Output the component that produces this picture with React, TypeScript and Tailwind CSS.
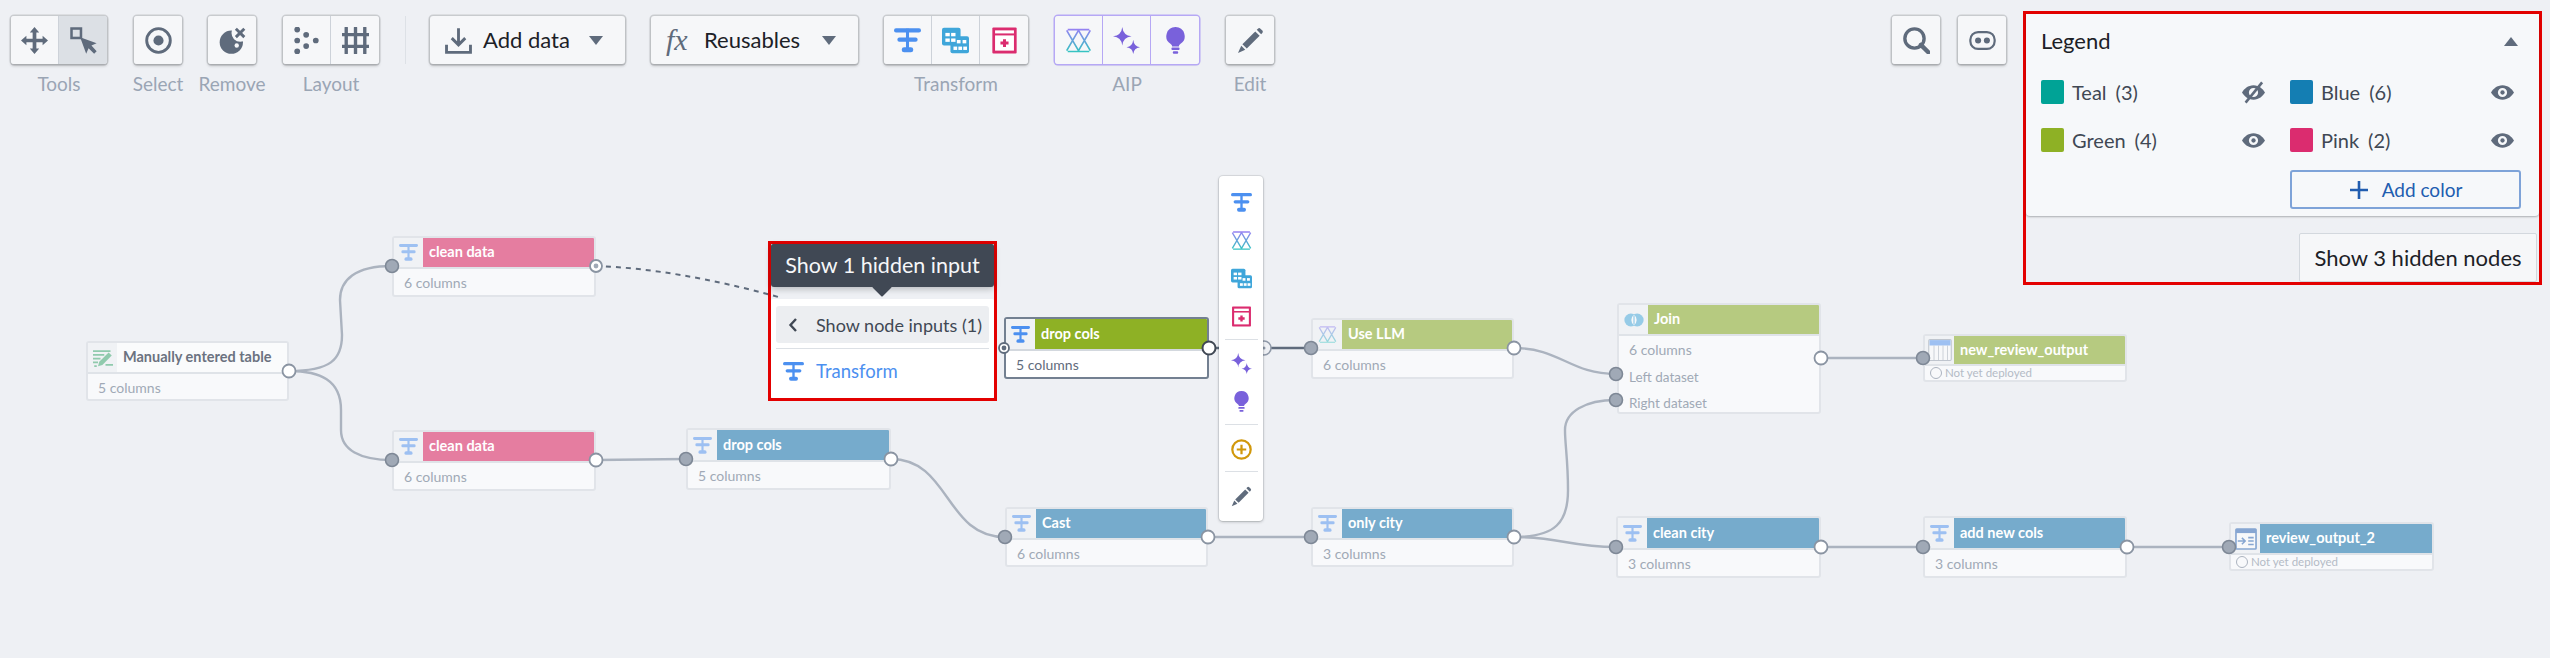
import React from "react";

const G = "#5F6B7C";

function Ic({ s = 27, children, className }: { s?: number; children: React.ReactNode; className?: string }) {
  return (
    <svg width={s} height={s} viewBox="0 0 16 16" className={className} aria-hidden="true">
      {children}
    </svg>
  );
}

const MoveI = () => (
  <Ic><path fill={G} d="M8 0 L5.2 3.2 H6.9 V6.9 H3.2 V5.2 L0 8 L3.2 10.8 V9.1 H6.9 V12.8 H5.2 L8 16 L10.8 12.8 H9.1 V9.1 H12.8 V10.8 L16 8 L12.8 5.2 V6.9 H9.1 V3.2 H10.8 Z" /></Ic>
);
const SelectI = () => (
  <Ic>
    <rect x="0.9" y="0.9" width="5.6" height="5.6" fill="none" stroke={G} strokeWidth="1.5" />
    <path fill={G} d="M6 6 L15.8 9.6 L12.7 11 L15.8 14.3 L14.3 15.8 L11 12.6 L9.6 15.8 Z" />
  </Ic>
);
const RingI = () => (
  <Ic>
    <circle cx="8" cy="8" r="7" fill="none" stroke={G} strokeWidth="1.7" />
    <circle cx="8" cy="8" r="3" fill={G} />
  </Ic>
);
const RemoveI = () => (
  <Ic>
    <circle cx="7.3" cy="9" r="6.9" fill={G} />
    <circle cx="12.6" cy="3.6" r="5.2" fill="#F6F7F9" />
    <circle cx="10.5" cy="11" r="1.3" fill="#F6F7F9" />
    <path d="M10 1 L15 6 M15 1 L10 6" stroke={G} strokeWidth="1.7" fill="none" />
  </Ic>
);
const LayoutI = () => (
  <Ic>
    {[[2.5, 1.5, 1.7], [2.5, 8, 1.7], [2.5, 14.5, 1.7], [7.8, 4.6, 1.7], [7.8, 11.3, 1.7], [13.5, 8, 1.7]].map(([x, y, r], i) => (
      <circle key={i} cx={x} cy={y} r={r} fill={G} />
    ))}
  </Ic>
);
const GridI = () => (
  <Ic><path d="M2.5 0.5V15.5 M8 0.5V15.5 M13.5 0.5V15.5 M0.5 4.5H15.5 M0.5 11.5H15.5" stroke={G} strokeWidth="2" fill="none" strokeLinecap="round" /></Ic>
);
const ImportI = () => (
  <Ic>
    <path d="M8 0.8V10 M4 6.6 L8 10.6 L12 6.6" stroke={G} strokeWidth="1.7" fill="none" />
    <path d="M0.9 10.5V15H15.1V10.5" stroke={G} strokeWidth="1.7" fill="none" />
  </Ic>
);
const TransformI = ({ s = 27 }: { s?: number }) => (
  <Ic s={s}>
    <rect x="0" y="0.8" width="16" height="2.5" rx="1.2" fill="#4C90F0" />
    <rect x="2" y="6.2" width="12" height="2.5" rx="1.2" fill="#4C90F0" />
    <rect x="4.6" y="12" width="6.8" height="3" rx="1.4" fill="#4C90F0" />
    <rect x="7.1" y="1" width="1.8" height="12" fill="#4C90F0" />
  </Ic>
);
const ContourI = ({ s = 27 }: { s?: number }) => (
  <Ic s={s}>
    <defs>
      <linearGradient id={`cg${s}`} x1="0" y1="1" x2="0" y2="15" gradientUnits="userSpaceOnUse">
        <stop offset="0" stopColor="#9881F3" />
        <stop offset="1" stopColor="#32C5C0" />
      </linearGradient>
    </defs>
    <path
      d="M1.6 1.5 H14.4 M1.6 14.5 H14.4 M1 2 L8 14 M8 2 L1 14 M8 2 L15 14 M15 2 L8 14"
      fill="none"
      stroke={`url(#cg${s})`}
      strokeWidth="1"
    />
  </Ic>
);
const TablesI = ({ s = 27 }: { s?: number }) => (
  <Ic s={s}>
    <rect x="0" y="0.5" width="11" height="10.5" rx="1.2" fill="#3FA6DA" />
    <rect x="5" y="5.5" width="11" height="10" rx="1.2" fill="#3FA6DA" />
    {[[2, 3.5], [5.4, 3.5], [2, 6.8], [5.4, 6.8]].map(([x, y], i) => (
      <rect key={i} x={x} y={y} width="2.6" height="2" fill="#fff" />
    ))}
    {[[8.8, 7.7], [12.2, 7.7], [6.8, 11.6], [9.7, 11.6], [12.6, 11.6]].map(([x, y], i) => (
      <rect key={i} x={x} y={y} width="2.2" height="2" fill="#fff" />
    ))}
  </Ic>
);
const CardI = ({ s = 27 }: { s?: number }) => (
  <Ic s={s}>
    <rect x="0.8" y="0.3" width="14.4" height="15.4" rx="0.6" fill="#DB2C6F" />
    <rect x="2.4" y="2" width="11.2" height="1.8" fill="#fff" />
    <rect x="2.4" y="5" width="11.2" height="9" fill="#fff" />
    <path d="M8 7.2V11.8 M5.6 9.5H10.4" stroke="#DB2C6F" strokeWidth="1.8" />
  </Ic>
);
const SparkI = ({ s = 27 }: { s?: number }) => (
  <Ic s={s}>
    <path fill="#7961DB" d="M5.5 0 Q6 5 11 5.5 Q6 6 5.5 11 Q5 6 0 5.5 Q5 5 5.5 0Z" />
    <path fill="#7961DB" d="M12 7.6 Q12.4 11.6 16 12 Q12.4 12.4 12 16 Q11.6 12.4 8 12 Q11.6 11.6 12 7.6Z" />
  </Ic>
);
const BulbI = ({ s = 27 }: { s?: number }) => (
  <Ic s={s}>
    <path fill="#7961DB" d="M8 0a5.4 5.4 0 0 0-3 9.9c.7.5 1 1 1 1.6h4c0-.6.3-1.1 1-1.6A5.4 5.4 0 0 0 8 0z" />
    <rect x="5.6" y="12.2" width="4.8" height="1.4" rx=".5" fill="#7961DB" />
    <rect x="6.4" y="14.4" width="3.2" height="1.4" rx=".6" fill="#7961DB" />
  </Ic>
);
const PencilI = ({ s = 27, c = G }: { s?: number; c?: string }) => (
  <Ic s={s}>
    <path fill={c} d="M3.2 10.2 L10.8 2.6 L13.4 5.2 L5.8 12.8 Z" />
    <path fill={c} d="M11.7 1.7 l.7-.7 a1.1 1.1 0 0 1 1.5 0 l1.1 1.1 a1.1 1.1 0 0 1 0 1.5 l-.7.7 Z" />
    <path fill={c} d="M2.5 11.1 L4.9 13.5 L0.6 15.4 Z" />
  </Ic>
);
const SearchI = () => (
  <Ic>
    <circle cx="6.8" cy="6.8" r="5.7" fill="none" stroke={G} strokeWidth="2" />
    <path d="M10.6 10.6 L15 15" stroke={G} strokeWidth="2.6" strokeLinecap="round" />
  </Ic>
);
const RobotI = () => (
  <Ic>
    <rect x="0.8" y="3" width="14.4" height="10" rx="4.6" fill="none" stroke={G} strokeWidth="1.3" />
    <circle cx="5.4" cy="8" r="1.8" fill={G} />
    <circle cx="10.6" cy="8" r="1.8" fill={G} />
  </Ic>
);
const EyeI = ({ off }: { off?: boolean }) => (
  <Ic s={23}>
    <path
      fill={G}
      fillRule="evenodd"
      d="M8 3C4.2 3 1.4 5.6 0 8c1.4 2.4 4.2 5 8 5s6.6-2.6 8-5c-1.4-2.4-4.2-5-8-5zM8 4.8a3.2 3.2 0 1 1 0 6.4 3.2 3.2 0 0 1 0-6.4z"
    />
    {off ? (
      <path d="M2.5 15 L14 1" stroke={G} strokeWidth="1.8" />
    ) : (
      <circle cx="8" cy="8" r="1.5" fill={G} />
    )}
  </Ic>
);
const Caret = ({ up }: { up?: boolean }) => (
  <svg width="14" height="11" viewBox="0 0 14 11" aria-hidden="true">
    <path d={up ? "M7 1 L14 10 H0 Z" : "M0 1 H14 L7 10 Z"} fill={G} />
  </svg>
);
const ManualI = () => (
  <Ic s={20}>
    <path d="M0 2.5H14 M0 5.5H9 M0 8.5H6 M0 11.5H4 M10 13.5H16 M1 14.5H3" stroke="#32A467" strokeWidth="1.3" />
    <path d="M5 11 L12.5 3.5 L15 6 L7.5 13.5 L4 14.5 Z" fill="#32A467" />
  </Ic>
);
const JoinI = () => (
  <Ic s={20}>
    <circle cx="5.5" cy="8" r="5.2" fill="#3FA6DA" />
    <circle cx="10.5" cy="8" r="5.2" fill="#3FA6DA" />
    <path d="M8 3.8a5.2 5.2 0 0 1 0 8.4a5.2 5.2 0 0 1 0-8.4Z" fill="#fff" />
    <path d="M8 4.4v7.2" stroke="#3FA6DA" strokeWidth="1" />
  </Ic>
);
const TableI = () => (
  <svg width="24" height="24" viewBox="0 0 16 16" aria-hidden="true">
    <rect x="0.5" y="1" width="15" height="14" rx="0.8" fill="#fff" stroke="#8F99A8" strokeWidth="0.7" />
    <rect x="1" y="1.4" width="14" height="3.6" fill="#4C90F0" />
    <path d="M4 5V15 M7 5V15 M10 5V15 M13 5V15" stroke="#8F99A8" strokeWidth="0.5" />
  </svg>
);
const OutputI = () => (
  <svg width="22" height="22" viewBox="0 0 16 16" aria-hidden="true">
    <rect x="0.7" y="0.7" width="14.6" height="14.6" rx="0.6" fill="#fff" stroke="#215DB0" strokeWidth="1.2" />
    <rect x="0.7" y="0.7" width="14.6" height="3" fill="#215DB0" />
    <path d="M2 9.5H7 M5 7.2 L7.4 9.5 L5 11.8 M9.6 7H13.6 M9.6 9.5H13.6 M9.6 12H13.6" stroke="#215DB0" strokeWidth="1.1" fill="none" />
  </svg>
);

function Btn({ children, active, purple, wide }: { children: React.ReactNode; active?: boolean; purple?: boolean; wide?: boolean }) {
  return (
    <button
      className={`flex h-[48px] items-center justify-center ${wide ? "" : "w-[48px]"} ${active ? "bg-[#DCE0E5]" : "bg-[#F6F7F9]"} ${
        purple ? "border-r-[1.5px] border-[#B6A8F5] last:border-r-0" : "border-r border-[#CDD2D9] last:border-r-0"
      }`}
    >
      {children}
    </button>
  );
}

function Group({ label, purple, children }: { label?: string; purple?: boolean; children: React.ReactNode }) {
  return (
    <div className="flex flex-col items-center">
      <div
        className={`flex overflow-hidden rounded-[3px] ${
          purple
            ? "shadow-[0_0_0_1.5px_#B6A8F5,0_1px_2px_rgba(17,20,24,0.15)]"
            : "shadow-[0_0_0_1.5px_rgba(17,20,24,0.14),0_1.5px_3px_rgba(17,20,24,0.22)]"
        }`}
      >
        {children}
      </div>
      <div className="flex h-[33px] w-0 items-end justify-center overflow-visible">
        <span className="whitespace-nowrap text-[19px] leading-[26px] text-[#9AA5B4]">{label}</span>
      </div>
    </div>
  );
}

function DropBtn({ icon, label, w }: { icon: React.ReactNode; label: string; w: string }) {
  return (
    <div className={`flex h-[48px] ${w} items-center gap-[11px] rounded-[3px] bg-[#F6F7F9] pl-[15px] pr-[22px] shadow-[0_0_0_1.5px_rgba(17,20,24,0.14),0_1.5px_3px_rgba(17,20,24,0.22)]`}>
      {icon}
      <span className="flex-1 whitespace-nowrap text-[22px] leading-none text-[#1C2127]">{label}</span>
      <Caret />
    </div>
  );
}

type N = {
  x: number;
  y: number;
  w: number;
  h: number;
  hh: number;
  color: string;
  title: string;
  icon: React.ReactNode;
  dim?: boolean;
  selected?: boolean;
  children: React.ReactNode;
};

function Node({ x, y, w, h, hh, color, title, icon, dim = true, selected, children }: N) {
  return (
    <div
      className={`absolute flex flex-col overflow-hidden rounded-[3px] border-2 ${selected ? "border-[#738091] bg-white" : "border-[#E1E4E9] bg-[#F8F9FB]"}`}
      style={{ left: x, top: y, width: w, height: h }}
    >
      <div className={`flex shrink-0 border-b-2 ${selected ? "border-[#D3D8DE]" : "border-[#DFE3E8]"}`} style={{ height: hh }}>
        <div className="flex w-[29px] shrink-0 items-center justify-center bg-[#F0F2F5]">
          <span className={dim ? "flex opacity-50" : "flex"}>{icon}</span>
        </div>
        <div className={`flex flex-1 items-center truncate pl-[6px] text-[14.5px] font-bold leading-none ${color}`}>{title}</div>
      </div>
      {children}
    </div>
  );
}

const Cols = ({ t, dark }: { t: string; dark?: boolean }) => (
  <div className={`pl-[10px] text-[14px] leading-[28px] ${dark ? "text-[#5F6B7C]" : "text-[#A0A9B6]"}`}>{t}</div>
);
const Deploy = () => (
  <div className="flex h-[18px] items-center gap-[3px] pl-[5px] text-[11.5px] leading-none text-[#B4BBC6]">
    <span className="h-[12px] w-[12px] rounded-full border border-[#ABB3BF]" />
    Not yet deployed
  </div>
);

const PINK = "bg-[#E57DA0] text-white";
const BLUE = "bg-[#76ABCC] text-white";
const LIME = "bg-[#B6CA80] text-white";

const ports: [number, number, "in" | "out" | "dot" | "sel" | "dotin"][] = [
  [289, 371, "out"],
  [392, 266, "in"],
  [596, 266, "dot"],
  [392, 460, "in"],
  [596, 460, "out"],
  [686, 459, "in"],
  [891, 459, "out"],
  [1005, 537, "in"],
  [1208, 537, "out"],
  [1311, 537, "in"],
  [1514, 537, "out"],
  [1004, 348, "dotin"],
  [1209, 348, "sel"],
  [1311, 348, "in"],
  [1514, 348, "out"],
  [1616, 374, "in"],
  [1616, 400, "in"],
  [1821, 358, "out"],
  [1923, 358, "in"],
  [1616, 547, "in"],
  [1821, 547, "out"],
  [1923, 547, "in"],
  [2127, 547, "out"],
  [2229, 547, "in"],
];

const edges = [
  "M289 371 C330 371 342 360 342 335 L340 300 C340 280 355 266 392 266",
  "M289 371 C320 371 341 380 341 410 L341 430 C341 450 360 460 392 460",
  "M596 460 L686 459",
  "M891 459 C950 459 945 537 1005 537",
  "M1208 537 L1311 537",
  "M1514 348 C1560 348 1570 374 1616 374",
  "M1514 537 C1556 537 1568 522 1568 490 C1568 460 1565 445 1565 430 C1565 412 1585 400 1616 400",
  "M1514 537 C1560 537 1570 547 1616 547",
  "M1821 358 L1923 358",
  "M1821 547 L1923 547",
  "M2127 547 L2229 547",
];

function LegendRow({ c, name, n, off }: { c: string; name: string; n: number; off?: boolean }) {
  return (
    <div className="flex h-[24px] items-center">
      <span className={`h-[24px] w-[23px] rounded-[2px] ${c}`} />
      <span className="ml-[8px] text-[20px] leading-none text-[#404854]">{name}</span>
      <span className="ml-[9px] flex-1 text-[20px] leading-none text-[#404854]">({n})</span>
      <EyeI off={off} />
    </div>
  );
}

export default function App() {
  return (
    <div className="relative h-[658px] w-[2550px] overflow-hidden bg-[#EEF0F4] font-['Lato','Open_Sans',sans-serif]">
      {/* Toolbar */}
      <div className="flex items-start pl-[11px] pt-[16px]">
        <Group label="Tools">
          <Btn><MoveI /></Btn>
          <Btn active><SelectI /></Btn>
        </Group>
        <div className="ml-[27px]"><Group label="Select"><Btn><RingI /></Btn></Group></div>
        <div className="ml-[26px]"><Group label="Remove"><Btn><RemoveI /></Btn></Group></div>
        <div className="ml-[27px]">
          <Group label="Layout">
            <Btn><LayoutI /></Btn>
            <Btn><GridI /></Btn>
          </Group>
        </div>
        <div className="ml-[26px] h-[48px] w-px bg-[#DDE1E6]" />
        <div className="ml-[24px]"><DropBtn w="w-[195px]" icon={<ImportI />} label="Add data" /></div>
        <div className="ml-[26px]">
          <DropBtn
            w="w-[207px]"
            icon={<span className="w-[27px] font-['Liberation_Serif',serif] text-[30px] italic leading-none text-[#5F6B7C]">fx</span>}
            label="Reusables"
          />
        </div>
        <div className="ml-[26px]">
          <Group label="Transform">
            <Btn><TransformI /></Btn>
            <Btn><TablesI /></Btn>
            <Btn><CardI /></Btn>
          </Group>
        </div>
        <div className="ml-[27px]">
          <Group label="AIP" purple>
            <Btn purple><ContourI /></Btn>
            <Btn purple><SparkI /></Btn>
            <Btn purple><BulbI /></Btn>
          </Group>
        </div>
        <div className="ml-[27px]"><Group label="Edit"><Btn><PencilI /></Btn></Group></div>
        <div className="ml-[618px]"><Group><Btn><SearchI /></Btn></Group></div>
        <div className="ml-[18px]"><Group><Btn><RobotI /></Btn></Group></div>
      </div>

      {/* Edges */}
      <svg className="absolute left-0 top-0" width="2550" height="658" fill="none" aria-hidden="true">
        {edges.map((d, i) => (
          <path key={i} d={d} stroke="#ABB3BF" strokeWidth="2.4" />
        ))}
        <path d="M1209 348 L1311 348" stroke="#5F6B7C" strokeWidth="2.4" />
        <path d="M596 266 C650 268 710 278 782 298" stroke="#5F6B7C" strokeWidth="2" strokeDasharray="5 5" />
        <circle cx="1264" cy="348" r="7" fill="#EEF0F4" stroke="#8F99A8" strokeWidth="1.5" />
        <circle cx="1264" cy="348" r="1.5" fill="#8F99A8" />
      </svg>

      {/* Nodes */}
      <Node x={86} y={341} w={203} h={60} hh={31} color="bg-[#FAFBFC] text-[#6B7280]" title="Manually entered table" icon={<ManualI />}>
        <Cols t="5 columns" />
      </Node>
      <Node x={392} y={236} w={204} h={61} hh={31} color={PINK} title="clean data" icon={<TransformI s={19} />}>
        <Cols t="6 columns" />
      </Node>
      <Node x={392} y={430} w={204} h={61} hh={31} color={PINK} title="clean data" icon={<TransformI s={19} />}>
        <Cols t="6 columns" />
      </Node>
      <Node x={686} y={428} w={205} h={62} hh={32} color={BLUE} title="drop cols" icon={<TransformI s={19} />}>
        <Cols t="5 columns" />
      </Node>
      <Node x={1004} y={317} w={205} h={62} hh={32} color="bg-[#8EB125] text-white" title="drop cols" icon={<TransformI s={19} />} dim={false} selected>
        <Cols t="5 columns" dark />
      </Node>
      <Node x={1005} y={507} w={203} h={60} hh={31} color={BLUE} title="Cast" icon={<TransformI s={19} />}>
        <Cols t="6 columns" />
      </Node>
      <Node x={1311} y={318} w={203} h={61} hh={31} color={LIME} title="Use LLM" icon={<ContourI s={19} />}>
        <Cols t="6 columns" />
      </Node>
      <Node x={1311} y={507} w={203} h={60} hh={31} color={BLUE} title="only city" icon={<TransformI s={19} />}>
        <Cols t="3 columns" />
      </Node>
      <Node x={1617} y={303} w={204} h={111} hh={31} color={LIME} title="Join" icon={<JoinI />}>
        <Cols t="6 columns" />
        <div className="pl-[10px] text-[13.5px] leading-[26px] text-[#A0A9B6]">Left dataset</div>
        <div className="pl-[10px] text-[13.5px] leading-[26px] text-[#A0A9B6]">Right dataset</div>
      </Node>
      <Node x={1923} y={334} w={204} h={48} hh={30} color={LIME} title="new_review_output" icon={<TableI />}>
        <Deploy />
      </Node>
      <Node x={1616} y={516} w={205} h={62} hh={32} color={BLUE} title="clean city" icon={<TransformI s={19} />}>
        <Cols t="3 columns" />
      </Node>
      <Node x={1923} y={516} w={204} h={62} hh={32} color={BLUE} title="add new cols" icon={<TransformI s={19} />}>
        <Cols t="3 columns" />
      </Node>
      <Node x={2229} y={522} w={205} h={49} hh={31} color={BLUE} title="review_output_2" icon={<OutputI />}>
        <Deploy />
      </Node>

      {/* Ports */}
      <svg className="absolute left-0 top-0" width="2550" height="658" aria-hidden="true">
        {ports.map(([x, y, k], i) =>
          k === "in" ? (
            <circle key={i} cx={x} cy={y} r="6.5" fill="#A0A9B6" stroke="#7E8896" strokeWidth="1.6" />
          ) : k === "out" ? (
            <circle key={i} cx={x} cy={y} r="6.5" fill="#fff" stroke="#8A94A2" strokeWidth="1.8" />
          ) : k === "sel" ? (
            <circle key={i} cx={x} cy={y} r="6.5" fill="#fff" stroke="#404854" strokeWidth="2" />
          ) : (
            <g key={i}>
              <circle cx={x} cy={y} r={k === "dot" ? 6 : 5} fill="#fff" stroke={k === "dot" ? "#8A94A2" : "#5F6B7C"} strokeWidth="1.8" />
              <circle cx={x} cy={y} r="2.4" fill={k === "dot" ? "#A0A9B6" : "#5F6B7C"} />
            </g>
          ),
        )}
      </svg>

      {/* Floating node toolbar */}
      <div className="absolute left-[1219px] top-[176px] flex h-[345px] w-[44px] flex-col items-center rounded-[4px] bg-white pt-[16px] shadow-[0_0_0_1px_rgba(17,20,24,0.08),0_1px_3px_rgba(17,20,24,0.25)]">
        <div className="flex flex-col items-center gap-[17px]">
          <TransformI s={21} />
          <ContourI s={21} />
          <TablesI s={21} />
          <CardI s={21} />
        </div>
        <div className="mb-[13px] mt-[12px] h-[1px] w-[33px] bg-[#DCE0E5]" />
        <div className="flex flex-col items-center gap-[17px]">
          <SparkI s={21} />
          <BulbI s={21} />
        </div>
        <div className="mb-[14px] mt-[12px] h-[1px] w-[33px] bg-[#DCE0E5]" />
        <Ic s={21}>
          <circle cx="8" cy="8" r="7" fill="none" stroke="#D1980B" strokeWidth="1.7" />
          <path d="M8 4.4V11.6 M4.4 8H11.6" stroke="#D1980B" strokeWidth="1.7" />
        </Ic>
        <div className="mb-[14px] mt-[11px] h-[1px] w-[33px] bg-[#DCE0E5]" />
        <PencilI s={21} />
      </div>

      {/* Hidden input popover */}
      <div className="absolute left-[768px] top-[241px] h-[160px] w-[229px] border-[3px] border-[#E30000]">
        <div className="relative flex h-[43px] items-center justify-center rounded-t-[2px] rounded-b-[3px] bg-[#404854] text-[21.5px] leading-none text-[#F6F7F9] shadow-[0_2px_6px_rgba(17,20,24,0.25)]">
          Show 1 hidden input
          <span className="absolute left-[104px] top-[36px] h-[14px] w-[14px] rotate-45 rounded-[1px] bg-[#404854]" />
        </div>
        <div className="mt-[12px] h-[99px] rounded-[2px] bg-white px-[5px] pt-[7px]">
          <div className="flex h-[37px] items-center rounded-[3px] bg-[#ECEEF1] pl-[12px] text-[#404854]">
            <svg width="10" height="16" viewBox="0 0 10 16" aria-hidden="true">
              <path d="M8 2 L2.5 8 L8 14" fill="none" stroke="#404854" strokeWidth="2.4" />
            </svg>
            <span className="ml-[18px] whitespace-nowrap text-[18px] leading-none">Show node inputs (1)</span>
          </div>
          <div className="mt-[5px] h-[1px] bg-[#DCE0E5]" />
          <div className="mt-[12px] flex items-center pl-[7px]">
            <TransformI s={21} />
            <span className="ml-[12px] text-[18.5px] leading-none text-[#4C90F0]">Transform</span>
          </div>
        </div>
      </div>

      {/* Legend */}
      <div className="absolute left-[2023px] top-[11px] flex h-[274px] w-[519px] flex-col border-[3px] border-[#E30000]">
        <div className="h-[203px] rounded-b-[4px] bg-[#F6F8FA] px-[15px] shadow-[0_1px_2px_rgba(17,20,24,0.3)]">
          <div className="flex h-[54px] items-center justify-between pr-[6px]">
            <span className="text-[22px] leading-none text-[#1C2127]">Legend</span>
            <Caret up />
          </div>
          <div className="mt-[12px] grid grid-cols-[224px_224px] gap-x-[25px] gap-y-[24px]">
            <LegendRow c="bg-[#00A396]" name="Teal" n={3} off />
            <LegendRow c="bg-[#147EB3]" name="Blue" n={6} />
            <LegendRow c="bg-[#8EB125]" name="Green" n={4} />
            <LegendRow c="bg-[#DB2C6F]" name="Pink" n={2} />
          </div>
          <div className="ml-[249px] mt-[18px] flex h-[39px] w-[231px] items-center justify-center gap-[13px] rounded-[3px] border-2 border-[#7EA3D8] text-[19px] leading-none text-[#215DB0]">
            <svg width="20" height="20" viewBox="0 0 20 20" aria-hidden="true">
              <path d="M10 1V19 M1 10H19" stroke="#215DB0" strokeWidth="2.6" />
            </svg>
            Add color
          </div>
        </div>
        <div className="ml-auto mr-[2px] mt-[17px] flex h-[49px] w-[238px] items-center justify-center rounded-[2px] border border-[#D3D8DE] bg-[#F6F7F9] text-[22px] leading-none text-[#1C2127]">
          Show 3 hidden nodes
        </div>
      </div>
    </div>
  );
}
